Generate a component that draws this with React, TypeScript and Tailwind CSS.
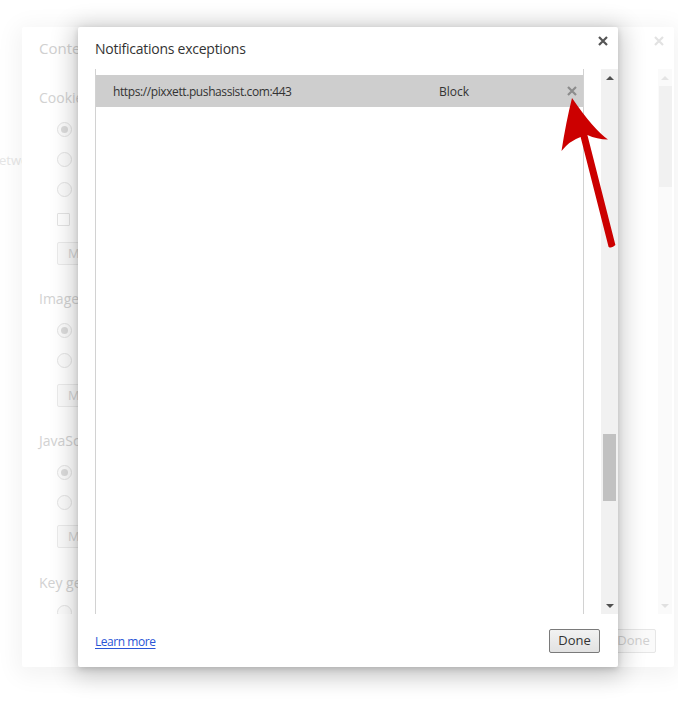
import React from "react";

const font = "font-['Open_Sans','Noto_Sans',sans-serif]";

function Triangle({ up, color }: { up?: boolean; color: string }) {
  return (
    <svg width="8" height="4" viewBox="0 0 8 4" className="block">
      <path d={up ? "M0 4 L4 0 L8 4 Z" : "M0 0 L8 0 L4 4 Z"} fill={color} />
    </svg>
  );
}

function Cross({ className, stroke }: { className?: string; stroke: string }) {
  return (
    <svg width="10" height="10" viewBox="0 0 10 10" className={className}>
      <path d="M1 1 L9 9 M9 1 L1 9" stroke={stroke} strokeWidth="2.2" strokeLinecap="butt" />
    </svg>
  );
}

function FadedRadio({ checked }: { checked?: boolean }) {
  return (
    <div className="flex h-[30px] items-center pl-[18px]">
      <div className="flex h-[15px] w-[15px] items-center justify-center rounded-full border border-[#e4e4e4] bg-[#fcfcfc]">
        {checked && <div className="h-[7px] w-[7px] rounded-full bg-[#dcdcdc]" />}
      </div>
    </div>
  );
}

function FadedCheckbox() {
  return (
    <div className="flex h-[30px] items-center pl-[18px]">
      <div className="h-[13px] w-[13px] rounded-[1px] border border-[#e4e4e4]" />
    </div>
  );
}

function FadedButton({ className }: { className?: string }) {
  return (
    <div
      className={`ml-[18px] flex h-[23px] w-[150px] items-center rounded-[2px] border border-[#ebebeb] bg-[#fbfbfb] pl-[10px] text-[13px] text-[#d4d4d4] ${className ?? ""}`}
    >
      Manage exceptions...
    </div>
  );
}

function Heading({ children, className }: { children: React.ReactNode; className?: string }) {
  return (
    <div className={`flex h-[20px] items-center text-[14px] text-[#d2d2d2] ${className ?? ""}`}>
      {children}
    </div>
  );
}

function BackDialog() {
  return (
    <div className="relative ml-[22px] mt-[27px] flex h-[640px] w-[652px] flex-col rounded-[2px] bg-white shadow-[0_4px_23px_5px_rgba(0,0,0,0.05)]">
      <div className="relative flex h-[42px] items-center pl-[17px] text-[15px] text-[#d0d0d0]">
        Content settings
        <Cross className="absolute right-[10px] top-[9px]" stroke="#e2e2e2" />
      </div>
      <div className="flex h-[545px]">
        <div className="flex-1 overflow-hidden pl-[17px]">
          <Heading className="mt-[18px]">Cookies</Heading>
          <div className="mt-[7px]">
            <FadedRadio checked />
            <FadedRadio />
            <FadedRadio />
            <FadedCheckbox />
          </div>
          <FadedButton className="mt-[8px]" />
          <Heading className="mt-[23px]">Images</Heading>
          <div className="mt-[7px]">
            <FadedRadio checked />
            <FadedRadio />
          </div>
          <FadedButton className="mt-[9px]" />
          <Heading className="mt-[23px]">JavaScript</Heading>
          <div className="mt-[7px]">
            <FadedRadio checked />
            <FadedRadio />
          </div>
          <FadedButton className="mt-[8px]" />
          <Heading className="mt-[24px]">Key generation</Heading>
          <div className="mt-[5px]">
            <FadedRadio />
          </div>
        </div>
        <div className="mr-[2px] flex w-[14px] flex-col items-center bg-[#fafafa]">
          <div className="flex h-[17px] items-center">
            <Triangle up color="#e4e4e4" />
          </div>
          <div className="h-[101px] w-[13px] bg-[#f1f1f1]" />
          <div className="flex-1" />
          <div className="flex h-[17px] items-center">
            <Triangle color="#e0e0e0" />
          </div>
        </div>
      </div>
      <div className="flex flex-1 items-center justify-end pr-[18px]">
        <div className="flex h-[24px] w-[45px] items-center justify-center rounded-[2px] border border-[#e6e6e6] bg-[#fafafa] text-[13px] text-[#d0d0d0]">
          Done
        </div>
      </div>
    </div>
  );
}

function Arrow() {
  return (
    <svg className="absolute left-0 top-0" width="678" height="726" viewBox="0 0 678 726">
      <path
        d="M572 98 Q566 122 561.5 151 Q569 141 580.6 136.9 L608.6 246.9 Q612 248.5 615.4 245.1 L587.4 135.1 Q597 139.5 608 139.5 Q594 130 572 98 Z"
        fill="#cc0000"
      />
    </svg>
  );
}

export default function App() {
  return (
    <div className={`relative h-[726px] w-[678px] overflow-hidden bg-white ${font}`}>
      <span className="absolute left-[-9px] top-[151px] text-[13px] text-[#e6e6e6]">network</span>
      <BackDialog />

      {/* Notifications exceptions overlay */}
      <div className="absolute left-[78px] top-[27px] flex h-[640px] w-[540px] flex-col rounded-[2px] bg-white shadow-[0_4px_23px_5px_rgba(0,0,0,0.2),0_2px_6px_rgba(0,0,0,0.15)]">
        <div className="relative flex h-[42px] items-center pl-[17px] text-[14px] tracking-[-0.25px] text-[#333]">
          Notifications exceptions
          <Cross className="absolute right-[10px] top-[9px]" stroke="#555" />
        </div>
        <div className="flex h-[545px]">
          <div className="ml-[17px] w-[489px] border-x border-[#d2d2d2] pt-[6px]">
            <div className="relative flex h-[32px] items-center bg-[#cecece] pt-[2px] text-[12px] text-[#333]">
              <span className="w-[343px] pl-[17px] tracking-[-0.4px]">https://pixxett.pushassist.com:443</span>
              <span>Block</span>
              <Cross className="absolute right-[6px] top-[11px]" stroke="#8c8c8c" />
            </div>
          </div>
          <div className="ml-auto flex w-[17px] flex-col items-center bg-[#f1f1f1]">
            <div className="flex h-[17px] items-center">
              <Triangle up color="#505050" />
            </div>
            <div className="flex-1" />
            <div className="h-[67px] w-[13px] bg-[#c1c1c1]" />
            <div className="h-[96px]" />
            <div className="flex h-[17px] items-center">
              <Triangle color="#505050" />
            </div>
          </div>
        </div>
        <div className="flex flex-1 items-center justify-between pl-[17px] pr-[18px]">
          <a className="pt-[2px] text-[12px] tracking-[-0.45px] text-[#2a55d6] underline underline-offset-2">Learn more</a>
          <div className="flex h-[24px] w-[51px] items-center justify-center rounded-[2px] border border-[#7a7a7a] bg-gradient-to-b from-[#f2f2f2] to-[#e2e2e2] text-[13px] text-[#333]">
            Done
          </div>
        </div>
      </div>

      <Arrow />
    </div>
  );
}
